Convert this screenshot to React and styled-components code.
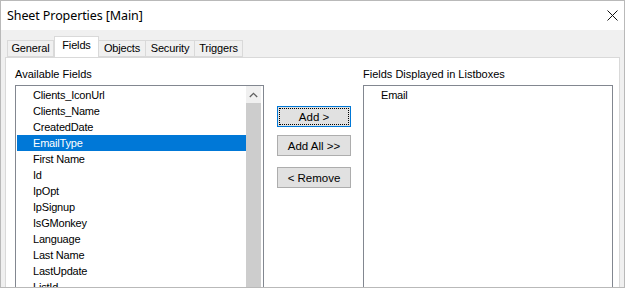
import styled, { createGlobalStyle } from 'styled-components';

const GlobalStyle = createGlobalStyle`
  html, body {
    margin: 0;
    padding: 0;
    overflow: hidden;
    background: #f0f0f0;
  }
`;

const availableFields = [
  'Clients_IconUrl',
  'Clients_Name',
  'CreatedDate',
  'EmailType',
  'First Name',
  'Id',
  'IpOpt',
  'IpSignup',
  'IsGMonkey',
  'Language',
  'Last Name',
  'LastUpdate',
  'ListId',
  'LastOpened',
];

const tabs = [
  { label: 'General', width: 47 },
  { label: 'Fields', width: 45 },
  { label: 'Objects', width: 47 },
  { label: 'Security', width: 49 },
  { label: 'Triggers', width: 48 },
];

export default function App() {
  return (
    <>
      <GlobalStyle />
      <Window>
        <TitleBar>
          <Title>Sheet Properties [Main]</Title>
          <CloseButton aria-label="Close">
            <svg width="11" height="11" viewBox="0 0 11 11">
              <path d="M0.5 0.5 L10.5 10.5 M10.5 0.5 L0.5 10.5" stroke="#111" strokeWidth="1" fill="none" />
            </svg>
          </CloseButton>
        </TitleBar>
        <Body>
          <TabStrip>
            {tabs.map(({ label, width }) => (
              <Tab key={label} $width={width} $active={label === 'Fields'}>
                {label}
              </Tab>
            ))}
          </TabStrip>
          <Panel>
            <Column>
              <Label>Available Fields</Label>
              <ListBox>
                <Rows>
                  {availableFields.map((field) => (
                    <Row key={field} $selected={field === 'EmailType'}>
                      {field}
                    </Row>
                  ))}
                </Rows>
                <ScrollBar>
                  <ScrollArrow>
                    <svg width="9" height="6" viewBox="0 0 9 6">
                      <path d="M0.8 5 L4.5 1.3 L8.2 5" stroke="#606060" strokeWidth="1.3" fill="none" />
                    </svg>
                  </ScrollArrow>
                  <ScrollThumb />
                </ScrollBar>
              </ListBox>
            </Column>
            <ButtonColumn>
              <Button $default>
                <FocusRect>Add &gt;</FocusRect>
              </Button>
              <Button>Add All &gt;&gt;</Button>
              <Button $spaced>&lt; Remove</Button>
            </ButtonColumn>
            <Column $wide>
              <Label>Fields Displayed in Listboxes</Label>
              <ListBox>
                <Rows>
                  <Row>Email</Row>
                </Rows>
              </ListBox>
            </Column>
          </Panel>
        </Body>
      </Window>
    </>
  );
}

const Window = styled.div`
  width: 625px;
  height: 288px;
  box-sizing: border-box;
  border: 1px solid #b9b9b9;
  display: flex;
  flex-direction: column;
  overflow: hidden;
  background: #f0f0f0;
  font-family: 'Liberation Sans', Arial, sans-serif;
  font-size: 11px;
  color: #000;
`;

const TitleBar = styled.div`
  height: 29px;
  flex: none;
  display: flex;
  align-items: center;
  justify-content: space-between;
  background: #fff;
  padding: 0 5px 0 6px;
`;

const Title = styled.span`
  font-family: 'Noto Sans', 'Open Sans', sans-serif;
  font-size: 12.5px;
  letter-spacing: -0.1px;
  margin-top: -1px;
`;

const CloseButton = styled.div`
  width: 11px;
  height: 11px;
  display: flex;
  margin-right: 1px;
  margin-top: -1px;
`;

const Body = styled.div`
  flex: 1;
  display: flex;
  flex-direction: column;
  padding: 7px 4px 0;
  min-height: 0;
`;

const TabStrip = styled.div`
  display: flex;
  align-items: flex-end;
  padding-left: 2px;
  height: 20px;
  position: relative;
  z-index: 1;
`;

const Tab = styled.div`
  box-sizing: border-box;
  width: ${(p) => p.$width}px;
  height: ${(p) => (p.$active ? '21px' : '17px')};
  padding-top: ${(p) => (p.$active ? '1px' : '0')};
  border: 1px solid #d9d9d9;
  border-bottom: ${(p) => (p.$active ? 'none' : '1px solid #d9d9d9')};
  border-left: ${(p) => (p.$active ? '1px solid #d9d9d9' : 'none')};
  background: ${(p) => (p.$active ? '#fff' : '#f0f0f0')};
  display: flex;
  justify-content: center;
  align-items: ${(p) => (p.$active ? 'flex-start' : 'center')};
  line-height: 15px;
  letter-spacing: -0.15px;
  white-space: nowrap;

  &:first-child {
    border-left: 1px solid #d9d9d9;
  }
`;

const Panel = styled.div`
  flex: 1;
  min-height: 0;
  display: flex;
  align-items: flex-start;
  gap: 13px;
  background: #fff;
  border: 1px solid #d9d9d9;
  border-bottom: none;
  padding: 9px 6px 0 9px;
  overflow: hidden;
`;

const Column = styled.div`
  width: ${(p) => (p.$wide ? '250px' : '249px')};
  flex: none;
  display: flex;
  flex-direction: column;
  margin-left: ${(p) => (p.$wide ? '-1px' : '0')};
`;

const Label = styled.div`
  line-height: 14px;
  margin-bottom: 4px;
`;

const ListBox = styled.div`
  height: 230px;
  box-sizing: border-box;
  border: 1px solid #828790;
  display: flex;
  background: #fff;
`;

const Rows = styled.div`
  flex: 1;
  padding: 1px 0 0 1px;
  overflow: hidden;
`;

const Row = styled.div`
  height: 16px;
  line-height: 16px;
  padding-left: 16px;
  white-space: nowrap;
  letter-spacing: -0.2px;
  background: ${(p) => (p.$selected ? '#0078d7' : 'transparent')};
  color: ${(p) => (p.$selected ? '#fff' : '#000')};
`;

const ScrollBar = styled.div`
  width: 15px;
  flex: none;
  margin-right: 2px;
  display: flex;
  flex-direction: column;
  background: #f0f0f0;
`;

const ScrollArrow = styled.div`
  height: 17px;
  display: flex;
  align-items: center;
  justify-content: center;
`;

const ScrollThumb = styled.div`
  flex: 1;
  background: #cdcdcd;
`;

const ButtonColumn = styled.div`
  width: 74px;
  flex: none;
  display: flex;
  flex-direction: column;
  padding-top: 39px;
`;

const Button = styled.div`
  box-sizing: border-box;
  height: 21px;
  margin-top: ${(p) => (p.$default ? '0' : p.$spaced ? '11px' : '8px')};
  border: 1px solid ${(p) => (p.$default ? '#0078d7' : '#adadad')};
  background: #e1e1e1;
  display: flex;
  align-items: center;
  justify-content: center;
  padding: ${(p) => (p.$default ? '1px' : '0')};
  font-size: 11.5px;
`;

const FocusRect = styled.div`
  flex: 1;
  align-self: stretch;
  border: 1px dotted #000;
  display: flex;
  align-items: center;
  justify-content: center;
`;
